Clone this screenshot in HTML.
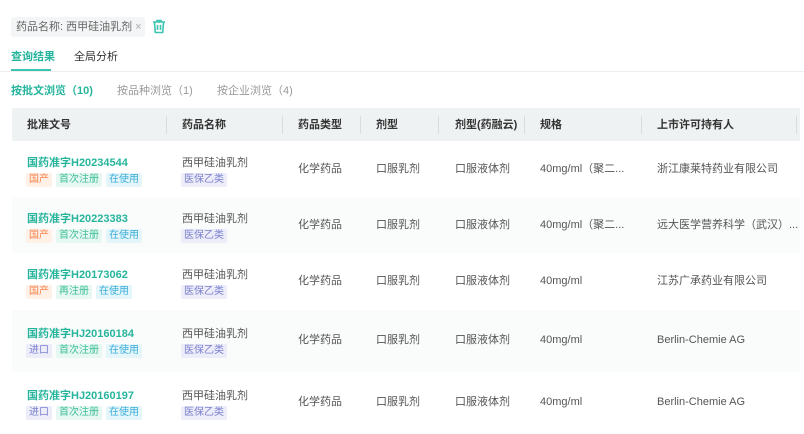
<!DOCTYPE html>
<html><head><meta charset="utf-8"><style>
*{margin:0;padding:0;box-sizing:border-box}
body{width:804px;height:434px;overflow:hidden;background:#fff;font-family:"Liberation Sans","Noto Sans CJK SC",sans-serif;color:#555;font-size:11px;position:relative}
.a{position:absolute;white-space:nowrap;line-height:14px}
.chip{left:11px;top:17px;width:134px;height:20px;background:#f4f5f6;border-radius:3px;font-size:11px;color:#666;line-height:20px;padding-left:5px}
.tab{font-size:11px;top:50px}
.row{position:absolute;left:12px;width:788px}
.g{background:#fafbfb}
.tt{color:#26b59c;font-weight:bold;font-size:11px}
.tag{display:inline-block;font-size:10px;line-height:14px;height:14px;padding:0 3px;border-radius:2px;margin-right:4px}
.o{background:#fff1e8;color:#f5824a}
.gr{background:#e7f8f2;color:#3ebf99}
.b{background:#e5f6fb;color:#3aaed8}
.p{background:#ecedf9;color:#7b7fce}
.hd{position:absolute;left:12px;top:108px;width:788px;height:33px;background:#eff2f3}
.h{position:absolute;top:118px;font-weight:bold;color:#333;font-size:11px;line-height:14px}
.sep{position:absolute;top:116px;width:1px;height:18px;background:#d9dde0}
.c{color:#555;font-size:11px}
</style></head><body>
<div class="a chip">药品名称: 西甲硅油乳剂 <span style="color:#aaa">×</span></div>
<svg class="a" style="left:152px;top:19px" width="14" height="15" viewBox="0 0 14 15"><g fill="none" stroke="#3cc4b0" stroke-width="1.6"><path d="M1 3h12M5 3V1.5h4V3M2.5 3.5l.8 10h7.4l.8-10M5.5 6v5M8.5 6v5"/></g></svg>
<div class="a tab" style="left:11px;color:#26b59c;font-weight:bold">查询结果</div>
<div class="a tab" style="left:74px;color:#333">全局分析</div>
<div class="a" style="left:11px;top:69px;width:40px;height:2px;background:#3cc4b0"></div>
<div class="a" style="left:0;top:71px;width:804px;height:1px;background:#eceeef"></div>
<div class="a" style="left:11px;top:84px;color:#26b59c;font-weight:bold">按批文浏览（10)</div>
<div class="a" style="left:117px;top:84px;color:#999">按品种浏览（1)</div>
<div class="a" style="left:217px;top:84px;color:#999">按企业浏览（4)</div>
<div class="hd"></div>
<div class="h" style="left:27px">批准文号</div>
<div class="h" style="left:182px">药品名称</div>
<div class="h" style="left:298px">药品类型</div>
<div class="h" style="left:376px">剂型</div>
<div class="h" style="left:455px">剂型(药融云)</div>
<div class="h" style="left:540px">规格</div>
<div class="h" style="left:657px">上市许可持有人</div>
<div class="sep" style="left:166px"></div><div class="sep" style="left:282px"></div><div class="sep" style="left:360px"></div><div class="sep" style="left:438px"></div><div class="sep" style="left:524px"></div><div class="sep" style="left:641px"></div><div class="sep" style="left:796px"></div>

<div class="row g" style="top:197px;height:56px"></div>
<div class="row g" style="top:310px;height:62px"></div>

<div class="a tt" style="left:27px;top:156px">国药准字H20234544</div>
<div class="a" style="left:26px;top:172px"><span class="tag o">国产</span><span class="tag gr">首次注册</span><span class="tag b">在使用</span></div>
<div class="a c" style="left:182px;top:156px">西甲硅油乳剂</div>
<div class="a" style="left:181px;top:172px"><span class="tag p">医保乙类</span></div>
<div class="a c" style="left:298px;top:162px">化学药品</div>
<div class="a c" style="left:376px;top:162px">口服乳剂</div>
<div class="a c" style="left:455px;top:162px">口服液体剂</div>
<div class="a c" style="left:540px;top:162px">40mg/ml（聚二...</div>
<div class="a c" style="left:657px;top:162px">浙江康莱特药业有限公司</div>

<div class="a tt" style="left:27px;top:212px">国药准字H20223383</div>
<div class="a" style="left:26px;top:228px"><span class="tag o">国产</span><span class="tag gr">首次注册</span><span class="tag b">在使用</span></div>
<div class="a c" style="left:182px;top:212px">西甲硅油乳剂</div>
<div class="a" style="left:181px;top:228px"><span class="tag p">医保乙类</span></div>
<div class="a c" style="left:298px;top:218px">化学药品</div>
<div class="a c" style="left:376px;top:218px">口服乳剂</div>
<div class="a c" style="left:455px;top:218px">口服液体剂</div>
<div class="a c" style="left:540px;top:218px">40mg/ml（聚二...</div>
<div class="a c" style="left:657px;top:218px">远大医学营养科学（武汉）...</div>

<div class="a tt" style="left:27px;top:268px">国药准字H20173062</div>
<div class="a" style="left:26px;top:284px"><span class="tag o">国产</span><span class="tag gr">再注册</span><span class="tag b">在使用</span></div>
<div class="a c" style="left:182px;top:268px">西甲硅油乳剂</div>
<div class="a" style="left:181px;top:284px"><span class="tag p">医保乙类</span></div>
<div class="a c" style="left:298px;top:274px">化学药品</div>
<div class="a c" style="left:376px;top:274px">口服乳剂</div>
<div class="a c" style="left:455px;top:274px">口服液体剂</div>
<div class="a c" style="left:540px;top:274px">40mg/ml</div>
<div class="a c" style="left:657px;top:274px">江苏广承药业有限公司</div>

<div class="a tt" style="left:27px;top:327px">国药准字HJ20160184</div>
<div class="a" style="left:26px;top:343px"><span class="tag p">进口</span><span class="tag gr">首次注册</span><span class="tag b">在使用</span></div>
<div class="a c" style="left:182px;top:327px">西甲硅油乳剂</div>
<div class="a" style="left:181px;top:343px"><span class="tag p">医保乙类</span></div>
<div class="a c" style="left:298px;top:333px">化学药品</div>
<div class="a c" style="left:376px;top:333px">口服乳剂</div>
<div class="a c" style="left:455px;top:333px">口服液体剂</div>
<div class="a c" style="left:540px;top:333px">40mg/ml</div>
<div class="a c" style="left:657px;top:333px">Berlin-Chemie AG</div>

<div class="a tt" style="left:27px;top:389px">国药准字HJ20160197</div>
<div class="a" style="left:26px;top:405px"><span class="tag p">进口</span><span class="tag gr">首次注册</span><span class="tag b">在使用</span></div>
<div class="a c" style="left:182px;top:389px">西甲硅油乳剂</div>
<div class="a" style="left:181px;top:405px"><span class="tag p">医保乙类</span></div>
<div class="a c" style="left:298px;top:395px">化学药品</div>
<div class="a c" style="left:376px;top:395px">口服乳剂</div>
<div class="a c" style="left:455px;top:395px">口服液体剂</div>
<div class="a c" style="left:540px;top:395px">40mg/ml</div>
<div class="a c" style="left:657px;top:395px">Berlin-Chemie AG</div>
</body></html>
